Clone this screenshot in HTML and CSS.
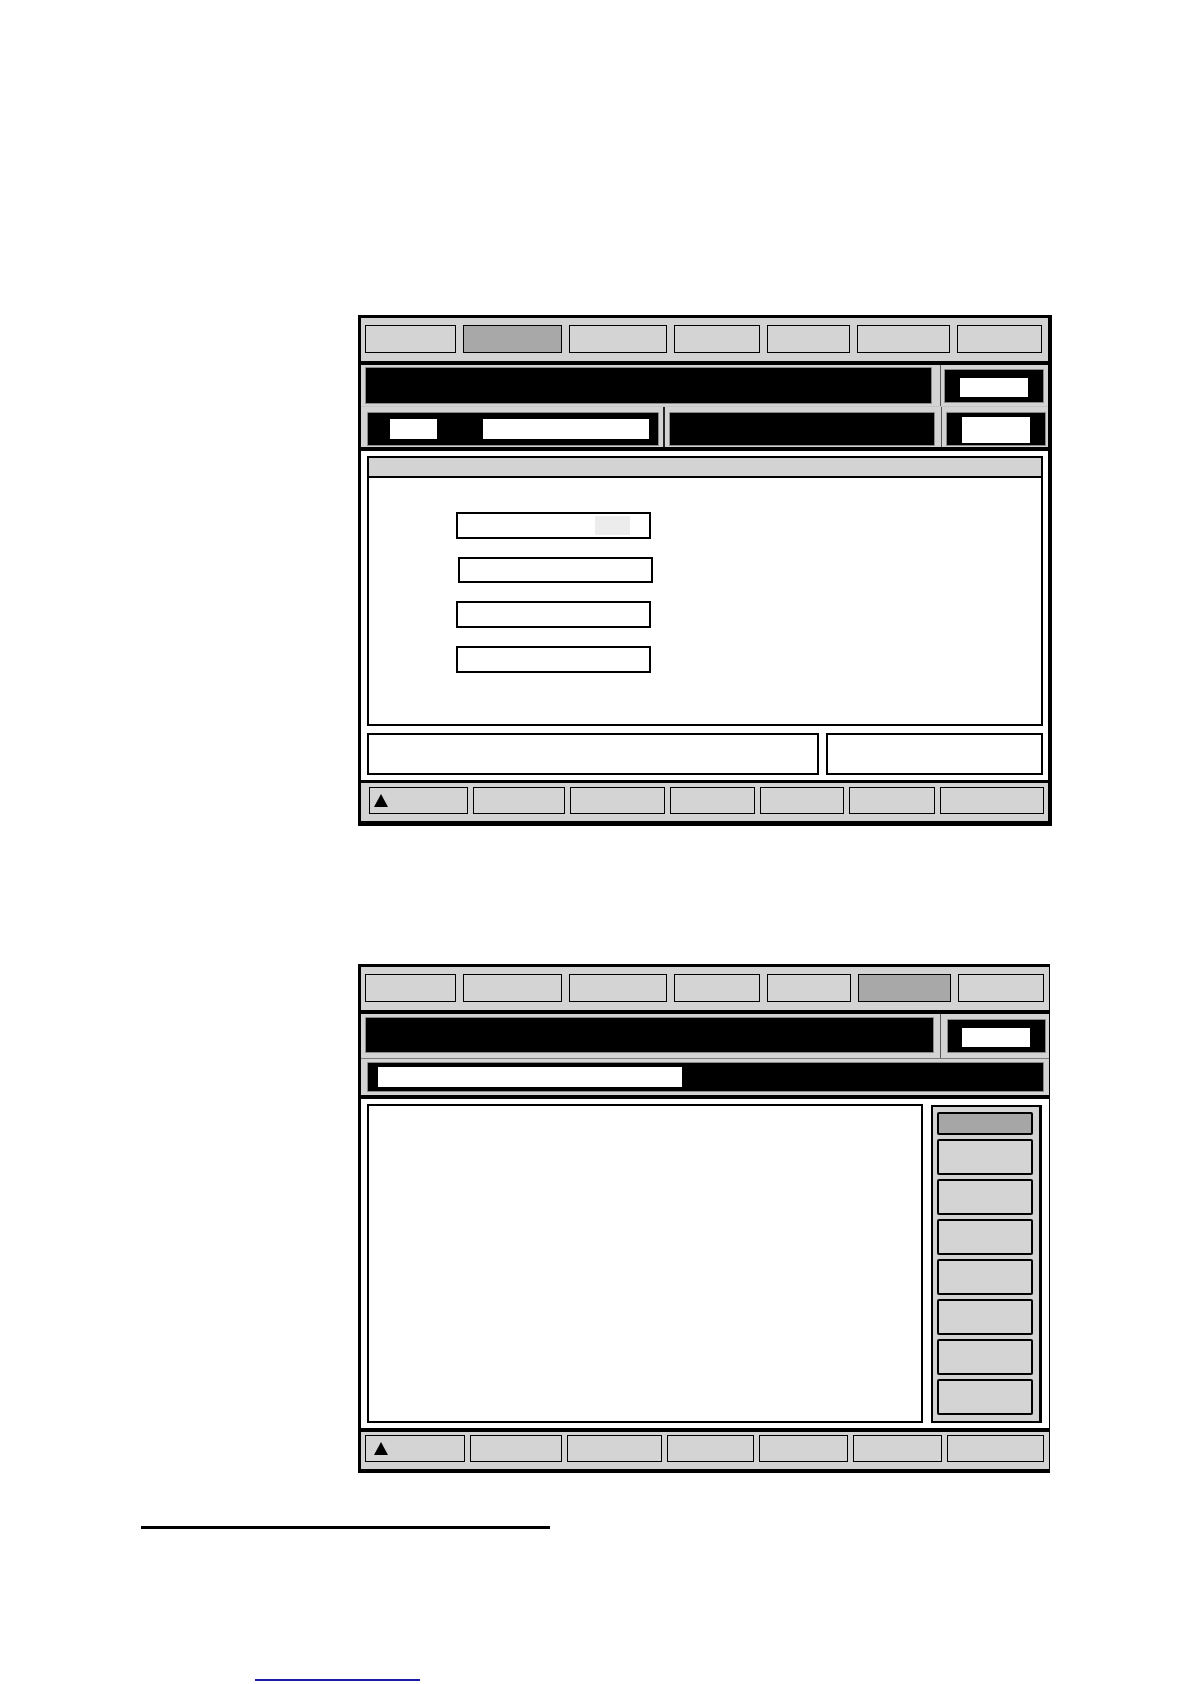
FILE: index.html
```html
<!DOCTYPE html>
<html lang="en">
<head>
<meta charset="utf-8">
<title>Screen layouts</title>
<link rel="stylesheet" href="styles.css">
</head>
<body>
<div class="page">

  <!-- Screen 1 -->
  <div class="frame frame-one">
    <div class="tabbar tabs-one">
      <div class="tab"></div>
      <div class="tab tab-active"></div>
      <div class="tab"></div>
      <div class="tab"></div>
      <div class="tab"></div>
      <div class="tab"></div>
      <div class="tab"></div>
    </div>
    <div class="row2 row2-one">
      <div class="cell-main"><div class="blackbox title-box"></div></div>
      <div class="cell-side"><div class="blackbox side-box"><div class="white-chip"></div></div></div>
    </div>
    <div class="row3-one">
      <div class="blackbox r3-left"><div class="white-a"></div><div class="white-b"></div></div>
      <div class="r3-sep"></div>
      <div class="blackbox r3-mid"></div>
      <div class="r3-sep2"></div>
      <div class="blackbox r3-right"><div class="white-chip tall"></div></div>
    </div>
    <div class="content content-one">
      <div class="panel">
        <div class="panel-head"></div>
        <div class="panel-body">
          <div class="field first"><div class="field-chip"></div></div>
          <div class="field shifted"></div>
          <div class="field"></div>
          <div class="field"></div>
        </div>
      </div>
      <div class="bottom-boxes">
        <div class="wbox box-wide"></div>
        <div class="wbox box-narrow"></div>
      </div>
    </div>
    <div class="toolbar tools-one">
      <div class="tbtn"><span class="tri"></span></div>
      <div class="tbtn"></div>
      <div class="tbtn"></div>
      <div class="tbtn"></div>
      <div class="tbtn"></div>
      <div class="tbtn"></div>
      <div class="tbtn"></div>
    </div>
  </div>

  <!-- Screen 2 -->
  <div class="frame frame-two">
    <div class="tabbar tabs-two">
      <div class="tab"></div>
      <div class="tab"></div>
      <div class="tab"></div>
      <div class="tab"></div>
      <div class="tab"></div>
      <div class="tab tab-active"></div>
      <div class="tab"></div>
    </div>
    <div class="row2 row2-two">
      <div class="cell-main"><div class="blackbox title-box2"></div></div>
      <div class="cell-side"><div class="blackbox side-box2"><div class="white-chip"></div></div></div>
    </div>
    <div class="row3-two">
      <div class="blackbox path-box"><div class="white-path"></div></div>
    </div>
    <div class="content content-two">
      <div class="list-panel"></div>
      <div class="side-panel">
        <div class="sbtn sbtn-active"></div>
        <div class="sbtn"></div>
        <div class="sbtn"></div>
        <div class="sbtn"></div>
        <div class="sbtn"></div>
        <div class="sbtn"></div>
        <div class="sbtn"></div>
        <div class="sbtn"></div>
      </div>
    </div>
    <div class="toolbar tools-two">
      <div class="tbtn tbtn-wide-pad"><span class="tri"></span></div>
      <div class="tbtn"></div>
      <div class="tbtn"></div>
      <div class="tbtn"></div>
      <div class="tbtn"></div>
      <div class="tbtn"></div>
      <div class="tbtn"></div>
    </div>
  </div>

  <div class="footnote-rule"></div>
  <div class="link-line"></div>
</div>
</body>
</html>
```

FILE: styles.css
```css
* { box-sizing: border-box; }

html, body {
  margin: 0;
  padding: 0;
  background: #ffffff;
  font-family: "Liberation Sans", Arial, sans-serif;
}

.page {
  width: 1190px;
  height: 1684px;
  overflow: hidden;
  padding-top: 315px;
}

/* ---------- frame ---------- */
.frame {
  margin-left: 358px;
  background: #ffffff;
  border: solid #000;
}
.frame-one {
  width: 694px;
  border-width: 3px 4px 5px 3px;
}
.frame-two {
  width: 692px;
  margin-top: 138px;
  border-width: 3px 1px 4px 3px;
}

/* ---------- tabs ---------- */
.tabbar {
  height: 47px;
  background: #d3d3d3;
  border-bottom: 4px solid #000;
  padding: 7px 0 0 4px;
  display: grid;
  column-gap: 7px;
  grid-template-rows: 28px;
}
.tabs-one { grid-template-columns: 91px 99px 98px 86px 83px 93px 85px; }
.tabs-two { grid-template-columns: 91px 99px 98px 86px 84px 93px 86px; }

.tab {
  background: #d4d4d4;
  border: 1px solid #000;
}
.tab-active { background: #a8a8a8; }

/* ---------- black bars ---------- */
.blackbox {
  background: #000;
  border: 1px solid #8a8a8a;
  border-radius: 1px;
}

.row2 {
  display: grid;
  grid-template-columns: 579px 1fr;
  background: #d3d3d3;
}
.row2-one { height: 41px; }
.row2-two { height: 45px; border-bottom: 1px solid #7a7a7a; }

.cell-main { padding: 2px 8px 0 4px; }
.cell-side {
  border-left: 1px solid #555;
  padding: 4px 4px 0 3px;
}
.title-box { height: 37px; }
.title-box2 { height: 36px; margin-top: 1px; width: 569px; }
.side-box { height: 34px; width: 100px; padding: 8px 0 0 15px; }
.side-box2 { height: 34px; width: 99px; margin-left: 3px; margin-top: 1px; padding: 8px 0 0 14px; }

.white-chip {
  width: 68px;
  height: 19px;
  background: #fff;
}
.white-chip.tall { height: 26px; margin-top: -5px; }

.row3-one {
  height: 41px;
  background: #d3d3d3;
  display: flex;
  align-items: flex-start;
  padding: 5px 0 0 6px;
  border-top: 1px solid #c4c4c4;
}
.r3-left {
  width: 292px;
  height: 34px;
  display: flex;
  padding: 6px 0 0 22px;
}
.white-a { width: 47px; height: 20px; background: #fff; }
.white-b { width: 166px; height: 20px; background: #fff; margin-left: 46px; }
.r3-sep {
  width: 2px;
  height: 40px;
  margin: -5px 4px 0 4px;
  background: #222;
}
.r3-mid { width: 266px; height: 34px; }
.r3-sep2 {
  width: 1px;
  height: 40px;
  margin: -5px 3px 0 6px;
  background: #555;
}
.r3-right {
  width: 100px;
  height: 34px;
  padding: 9px 0 0 15px;
  margin-left: 1px;
}

.row3-two {
  height: 36px;
  background: #d3d3d3;
  padding: 3px 0 0 6px;
}
.path-box {
  width: 677px;
  height: 30px;
  padding: 4px 0 0 10px;
}
.white-path { width: 304px; height: 20px; background: #fff; }

/* ---------- content ---------- */
.content {
  background: #fff;
  border-top: 4px solid #000;
  border-bottom: 4px solid #000;
}
.content-one {
  height: 336px;
  padding: 5px 5px 0 6px;
  border-bottom-width: 3px;
}
.panel {
  width: 676px;
  height: 270px;
  border: 2px solid #000;
}
.panel-head {
  height: 20px;
  background: #d3d3d3;
  border-bottom: 2px solid #000;
}
.panel-body {
  padding: 34px 0 0 87px;
  display: flex;
  flex-direction: column;
  gap: 18px;
}
.field {
  width: 195px;
  height: 27px;
  border: 2px solid #000;
  background: #fff;
}
.field.shifted { margin-left: 2px; height: 26px; }
.field-chip {
  width: 35px;
  height: 19px;
  margin: 2px 0 0 137px;
  background: #ececec;
}

.bottom-boxes {
  display: flex;
  gap: 7px;
  margin-top: 7px;
}
.wbox {
  height: 42px;
  border: 2px solid #000;
  background: #fff;
}
.box-wide { width: 453px; }
.box-narrow { width: 217px; }

.content-two {
  height: 337px;
  display: flex;
  align-items: flex-start;
  padding: 5px 0 0 6px;
}
.list-panel {
  width: 556px;
  height: 319px;
  border: 2px solid #000;
  background: #fff;
}
.side-panel {
  width: 111px;
  height: 318px;
  margin: 1px 0 0 8px;
  border: 2px solid #000;
  border-right-width: 3px;
  background: #d3d3d3;
  padding: 5px 0 0 4px;
  display: flex;
  flex-direction: column;
  gap: 4px;
}
.sbtn {
  width: 96px;
  height: 36px;
  border: 2px solid #000;
  border-radius: 2px;
  background: #d4d4d4;
}
.sbtn-active {
  height: 23px;
  background: #a6a6a6;
}

/* ---------- bottom toolbar ---------- */
.toolbar {
  background: #d3d3d3;
  display: grid;
  column-gap: 5px;
  grid-template-rows: 27px;
}
.tools-one {
  height: 38px;
  padding: 4px 0 0 8px;
  grid-template-columns: 99px 92px 95px 85px 84px 86px 104px;
}
.tools-two {
  height: 37px;
  padding: 3px 0 0 4px;
  grid-template-columns: 100px 92px 95px 87px 89px 89px 97px;
}
.tbtn {
  background: #d4d4d4;
  border: 1px solid #000;
  display: flex;
  align-items: center;
  padding-left: 4px;
}
.tbtn-wide-pad { padding-left: 8px; }
.tri {
  width: 0;
  height: 0;
  border-left: 7px solid transparent;
  border-right: 7px solid transparent;
  border-bottom: 13px solid #000;
}

/* ---------- page rules ---------- */
.footnote-rule {
  width: 409px;
  height: 3px;
  margin: 53px 0 0 141px;
  background: #000;
}
.link-line {
  width: 165px;
  height: 2px;
  margin: 150px 0 0 255px;
  background: #1c1ca8;
}
```
